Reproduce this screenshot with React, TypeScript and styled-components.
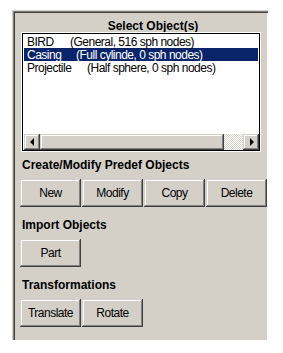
import React from "react";
import styled, { createGlobalStyle } from "styled-components";

const GlobalStyle = createGlobalStyle`
  html, body {
    margin: 0;
    padding: 0;
    background: #ffffff;
  }
`;

const face = "#d4d0c8";
const shadow = "#808080";
const darkShadow = "#404040";
const highlight = "#ffffff";

const uiFont = `"Liberation Sans", Arial, sans-serif`;

const Frame = styled.div`
  box-sizing: border-box;
  margin: 10px 0 0 12px;
  width: 256px;
  height: 330px;
  padding: 0 0 0 9px;
  background: ${face};
  box-shadow: inset 1px 1px ${face}, inset 2px 2px ${shadow}, inset 3px 3px ${darkShadow},
    inset -1px 0 ${highlight};
  display: flex;
  flex-direction: column;
`;

const Title = styled.div`
  margin-top: 9px;
  padding-left: 17px;
  height: 13px;
  line-height: 13px;
  text-align: center;
  font: bold 12px ${uiFont};
  color: #000;
`;

const ListBox = styled.div`
  box-sizing: border-box;
  width: 240px;
  height: 120px;
  border: 1px solid ${highlight};
  display: flex;
  flex-direction: column;
  background: ${highlight};
  box-shadow: inset 0 0 0 1px #000;
  padding: 1px;
`;

const Rows = styled.div`
  flex: 1 1 auto;
  padding: 1px 1px 0;
`;

const Row = styled.div<{ $selected?: boolean }>`
  height: 13px;
  line-height: 13px;
  padding-left: 3px;
  white-space: nowrap;
  font: 12px ${uiFont};
  letter-spacing: -0.5px;
  color: ${(p) => (p.$selected ? "#ffffff" : "#000000")};
  background: ${(p) => (p.$selected ? "#0a246a" : "transparent")};
`;

const Name = styled.span<{ $width: number }>`
  display: inline-block;
  width: ${(p) => p.$width}px;
`;

const ScrollBar = styled.div`
  height: 16px;
  display: flex;
  padding: 0 0 0 1px;
`;

const raised = `
  box-sizing: border-box;
  background: ${face};
  box-shadow: inset -1px -1px ${darkShadow}, inset 1px 1px ${face},
    inset -2px -2px ${shadow}, inset 2px 2px ${highlight};
`;

const ArrowButton = styled.div<{ $dir: "left" | "right" }>`
  ${raised}
  width: 16px;
  height: 16px;
  display: flex;
  align-items: center;
  justify-content: center;
  &::after {
    content: "";
    width: 0;
    height: 0;
    border-top: 4px solid transparent;
    border-bottom: 4px solid transparent;
    ${(p) =>
      p.$dir === "left"
        ? "border-right: 4px solid #000; margin-left: -1px;"
        : "border-left: 4px solid #000; margin-left: 1px;"}
  }
`;

const Thumb = styled.div`
  ${raised}
  width: 184px;
  height: 16px;
`;

const Track = styled.div`
  flex: 1 1 auto;
  height: 16px;
  background: repeating-conic-gradient(${highlight} 0 25%, ${face} 0 50%) 0 0 / 2px 2px;
`;

const SectionLabel = styled.div<{ $first?: boolean }>`
  margin-top: ${(p) => (p.$first ? 6 : 11)}px;
  padding-left: 1px;
  height: 14px;
  line-height: 14px;
  font: bold 12px ${uiFont};
  color: #000;
`;

const ButtonRow = styled.div`
  margin-top: 7px;
  margin-left: -1px;
  display: flex;
  gap: 1px;
`;

const PushButton = styled.button`
  ${raised}
  width: 61px;
  height: 28px;
  padding: 0;
  border: none;
  font: 12px ${uiFont};
  letter-spacing: -0.5px;
  color: #000;
  cursor: default;
`;

type Item = { name: string; detail: string; nameWidth: number; selected?: boolean };

const items: Item[] = [
  { name: "BIRD", detail: "(General, 516 sph nodes)", nameWidth: 43 },
  { name: "Casing", detail: "(Full cylinde, 0 sph nodes)", nameWidth: 49, selected: true },
  { name: "Projectile", detail: "(Half sphere, 0 sph nodes)", nameWidth: 60 },
];

const App: React.FC = () => (
  <>
    <GlobalStyle />
    <Frame>
      <Title>Select Object(s)</Title>
      <ListBox>
        <Rows>
          {items.map((item) => (
            <Row key={item.name} $selected={item.selected}>
              <Name $width={item.nameWidth}>{item.name}</Name>
              {item.detail}
            </Row>
          ))}
        </Rows>
        <ScrollBar>
          <ArrowButton $dir="left" />
          <Thumb />
          <Track />
          <ArrowButton $dir="right" />
        </ScrollBar>
      </ListBox>

      <SectionLabel $first>Create/Modify Predef Objects</SectionLabel>
      <ButtonRow>
        <PushButton>New</PushButton>
        <PushButton>Modify</PushButton>
        <PushButton>Copy</PushButton>
        <PushButton>Delete</PushButton>
      </ButtonRow>

      <SectionLabel>Import Objects</SectionLabel>
      <ButtonRow>
        <PushButton>Part</PushButton>
      </ButtonRow>

      <SectionLabel>Transformations</SectionLabel>
      <ButtonRow>
        <PushButton>Translate</PushButton>
        <PushButton>Rotate</PushButton>
      </ButtonRow>
    </Frame>
  </>
);

export default App;
